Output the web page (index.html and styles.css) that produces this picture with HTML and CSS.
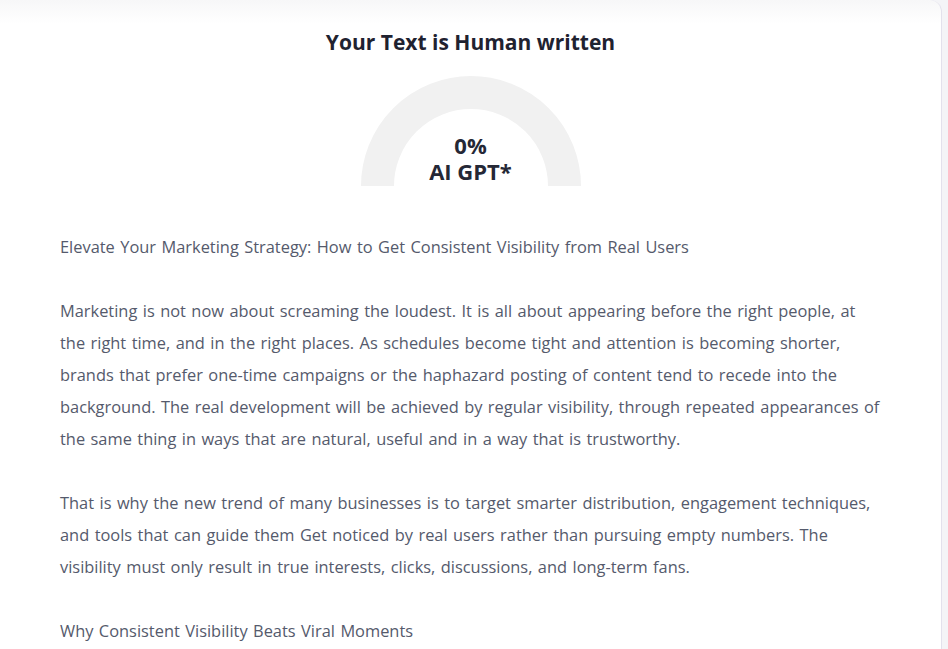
FILE: index.html
```html
<!DOCTYPE html>
<html lang="en">
<head>
<meta charset="utf-8">
<title>AI Detector Result</title>
<link rel="stylesheet" href="styles.css">
</head>
<body>
<div class="page">
  <main class="card">
    <h2 class="verdict">Your Text is Human written</h2>
    <div class="gauge">
      <div class="gauge-ring"></div>
      <div class="gauge-label">
        <span>0%</span>
        <span>AI GPT*</span>
      </div>
    </div>
    <div class="text">
      <p>Elevate Your Marketing Strategy: How to Get Consistent Visibility from Real Users</p>
      <p>Marketing is not now about screaming the loudest. It is all about appearing before the right people, at the right time, and in the right places. As schedules become tight and attention is becoming shorter, brands that prefer one-time campaigns or the haphazard posting of content tend to recede into the background. The real development will be achieved by regular visibility, through repeated appearances of the same thing in ways that are natural, useful and in a way that is trustworthy.</p>
      <p>That is why the new trend of many businesses is to target smarter distribution, engagement techniques, and tools that can guide them Get noticed by real users rather than pursuing empty numbers. The visibility must only result in true interests, clicks, discussions, and long-term fans.</p>
      <p>Why Consistent Visibility Beats Viral Moments</p>
    </div>
  </main>
</div>
</body>
</html>
```
FILE: styles.css
```css
* { box-sizing: border-box; }
html, body { margin: 0; padding: 0; }
body {
  background: #f4f4f7;
  font-family: "Open Sans", "Noto Sans", sans-serif;
  overflow: hidden;
  height: 649px;
}
.page {
  width: 942px;
  height: 649px;
}
.card {
  height: 100%;
  background: linear-gradient(#f7f7f8 0, #ffffff 24px);
  border-right: 1px solid #e3e1ec;
  border-top-right-radius: 12px;
  padding: 28px 60px 0 60px;
}
.verdict {
  margin: 0;
  text-align: center;
  font-size: 21px;
  font-weight: 700;
  color: #1f2230;
  line-height: 28px;
}
.gauge {
  position: relative;
  width: 220px;
  height: 110px;
  margin: 20px auto 0;
  overflow: hidden;
}
.gauge-ring {
  width: 220px;
  height: 220px;
  border-radius: 50%;
  border: 33px solid #f1f1f1;
}
.gauge-label {
  position: absolute;
  left: 0;
  right: 0;
  top: 56px;
  display: flex;
  flex-direction: column;
  align-items: center;
  font-size: 22px;
  font-weight: 700;
  color: #252836;
  line-height: 26px;
}
.text {
  margin-top: 45px;
  color: #555a6c;
  font-size: 16.4px;
  word-spacing: 1.2px;
  line-height: 32px;
}
.text p { margin: 0 0 32px; }
```
